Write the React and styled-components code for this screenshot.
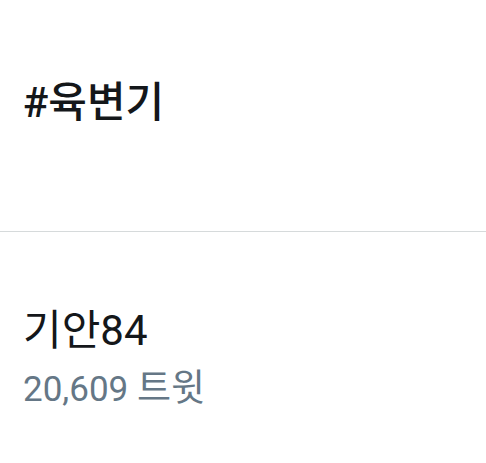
import React from "react";
import styled, { createGlobalStyle } from "styled-components";

const Global = createGlobalStyle`
  html, body { margin: 0; padding: 0; background: #fff; }
  body { font-family: Roboto, "Noto Sans CJK KR", sans-serif; }
`;

const List = styled.div`
  display: flex;
  flex-direction: column;
  width: 486px;
`;

const Item = styled.div`
  display: flex;
  flex-direction: column;
  align-items: flex-start;
  padding: ${(p) => p.$top}px 23px 0;
  height: ${(p) => p.$h}px;
  border-bottom: ${(p) => (p.$divider ? "1px solid #d6dadb" : "none")};
  box-sizing: border-box;
`;

const Title = styled.div`
  font-size: 42px;
  line-height: 52px;
  color: #14171a;
  font-weight: ${(p) => (p.$bold ? 500 : 400)};
`;

const Meta = styled.div`
  margin-top: 9px;
  font-size: 35px;
  line-height: 46px;
  color: #657786;
`;

const Unit = styled.span`
  font-size: 37px;
`;

export default function App() {
  return (
    <>
      <Global />
      <List>
        <Item $h={232} $top={77} $divider>
          <Title $bold>#육변기</Title>
        </Item>
        <Item $h={231} $top={73}>
          <Title>기안84</Title>
          <Meta>
            20,609 <Unit>트윗</Unit>
          </Meta>
        </Item>
      </List>
    </>
  );
}
